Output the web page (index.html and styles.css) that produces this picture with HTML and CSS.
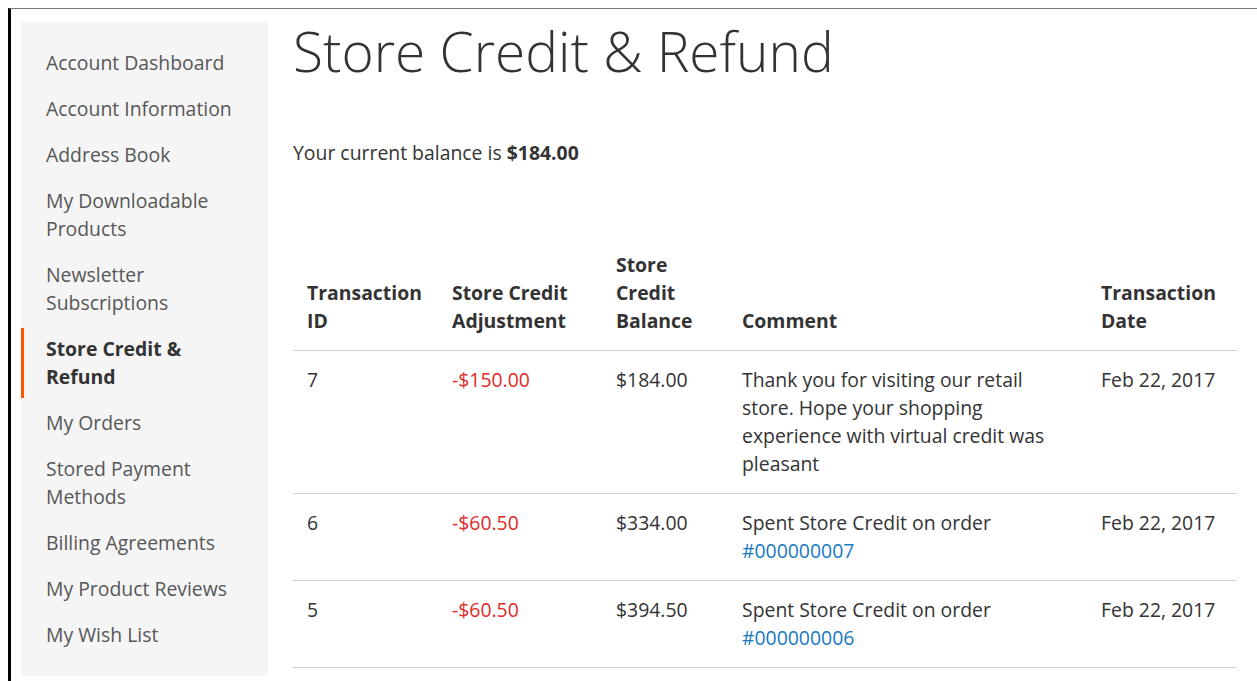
FILE: index.html
```html
<!DOCTYPE html>
<html lang="en">
<head>
<meta charset="utf-8">
<title>Store Credit &amp; Refund</title>
<link rel="stylesheet" href="styles.css">
</head>
<body>
<div class="frame">
  <div class="page">
    <aside class="sidebar">
      <ul class="nav">
        <li><a href="#">Account Dashboard</a></li>
        <li><a href="#">Account Information</a></li>
        <li><a href="#">Address Book</a></li>
        <li><a href="#">My Downloadable Products</a></li>
        <li><a href="#">Newsletter Subscriptions</a></li>
        <li class="current"><strong>Store Credit &amp; Refund</strong></li>
        <li><a href="#">My Orders</a></li>
        <li><a href="#">Stored Payment Methods</a></li>
        <li><a href="#">Billing Agreements</a></li>
        <li><a href="#">My Product Reviews</a></li>
        <li><a href="#">My Wish List</a></li>
      </ul>
    </aside>
    <main class="main">
      <h1 class="title">Store Credit &amp; Refund</h1>
      <p class="balance">Your current balance is <strong>$184.00</strong></p>
      <table class="history">
        <colgroup>
          <col class="c-id"><col class="c-adj"><col class="c-bal"><col class="c-comment"><col class="c-date">
        </colgroup>
        <thead>
          <tr>
            <th>Transaction ID</th>
            <th>Store Credit Adjustment</th>
            <th>Store Credit Balance</th>
            <th>Comment</th>
            <th>Transaction Date</th>
          </tr>
        </thead>
        <tbody>
          <tr>
            <td>7</td>
            <td class="neg">-$150.00</td>
            <td>$184.00</td>
            <td>Thank you for visiting our retail store. Hope your shopping experience with virtual credit was pleasant</td>
            <td>Feb 22, 2017</td>
          </tr>
          <tr>
            <td>6</td>
            <td class="neg">-$60.50</td>
            <td>$334.00</td>
            <td>Spent Store Credit on order <a href="#">#000000007</a></td>
            <td>Feb 22, 2017</td>
          </tr>
          <tr>
            <td>5</td>
            <td class="neg">-$60.50</td>
            <td>$394.50</td>
            <td>Spent Store Credit on order <a href="#">#000000006</a></td>
            <td>Feb 22, 2017</td>
          </tr>
        </tbody>
      </table>
    </main>
  </div>
</div>
</body>
</html>
```

FILE: styles.css
```css
html, body {
  margin: 0;
  padding: 0;
  background: #fff;
}

body {
  font-family: "Open Sans", "Liberation Sans", sans-serif;
  font-size: 19.4px;
  line-height: 28px;
  color: #333;
  height: 681px;
  overflow: hidden;
}

.frame {
  margin: 8px 0 0 8px;
  border-top: 1px solid #7a7a7a;
  border-left: 3px solid #000;
  height: 700px;
}

.page {
  display: flex;
  align-items: flex-start;
  gap: 25px;
  padding: 13px 0 0 10px;
}

/* account navigation */
.sidebar {
  flex: 0 0 247px;
  background: #f5f5f5;
  padding: 18px 0;
}

.nav {
  list-style: none;
  margin: 0;
  padding: 0;
}

.nav li {
  padding: 2px 0;
}

.nav a,
.nav strong {
  display: block;
  padding: 7px 30px 7px 25px;
  color: #575757;
  text-decoration: none;
}

.nav .current strong {
  color: #333;
  font-weight: 700;
  border-left: 3px solid #ff5501;
  padding-left: 22px;
}

/* main column */
.main {
  flex: 0 0 944px;
}

.title {
  margin: -3px 0 0;
  font-size: 55px;
  font-weight: 300;
  line-height: 64px;
  color: #333;
}

.balance {
  margin: 56px 0 0;
}

.history {
  margin-top: 69px;
  width: 944px;
  border-collapse: collapse;
  table-layout: fixed;
}

.c-id { width: 145px; }
.c-adj { width: 164px; }
.c-bal { width: 126px; }
.c-comment { width: 359px; }
.c-date { width: 150px; }

.history th,
.history td {
  text-align: left;
  padding: 15px 14px;
}

.history th {
  vertical-align: bottom;
  font-weight: 700;
  border-bottom: 1px solid #d1d1d1;
}

.history td {
  vertical-align: top;
  border-bottom: 1px solid #d1d1d1;
}

.history .neg {
  color: #e02b27;
}

.history a {
  color: #1979c3;
  text-decoration: none;
}
```
